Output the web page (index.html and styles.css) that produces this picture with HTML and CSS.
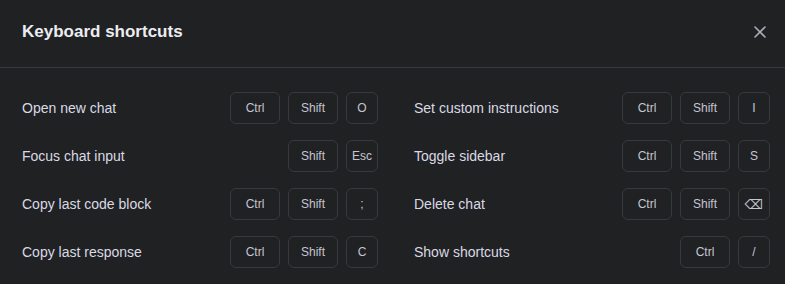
FILE: index.html
```html
<!DOCTYPE html>
<html lang="en">
<head>
<meta charset="UTF-8">
<meta name="viewport" content="width=device-width, initial-scale=1.0">
<title>Keyboard shortcuts</title>
<link rel="stylesheet" href="styles.css">
</head>
<body>
<div class="dialog">
  <div class="header">
    <div class="title">Keyboard shortcuts</div>
    <button class="close" aria-label="Close">
      <svg width="12" height="12" viewBox="0 0 12 12" fill="none">
        <path d="M1 1L11 11M11 1L1 11" stroke="currentColor" stroke-width="1.6" stroke-linecap="round"/>
      </svg>
    </button>
  </div>

  <div class="shortcuts">
    <div class="shortcut">
      <span class="label">Open new chat</span>
      <div class="keys"><kbd class="key word">Ctrl</kbd><kbd class="key word">Shift</kbd><kbd class="key">O</kbd></div>
    </div>
    <div class="shortcut">
      <span class="label">Set custom instructions</span>
      <div class="keys"><kbd class="key word">Ctrl</kbd><kbd class="key word">Shift</kbd><kbd class="key">I</kbd></div>
    </div>
    <div class="shortcut">
      <span class="label">Focus chat input</span>
      <div class="keys"><kbd class="key word">Shift</kbd><kbd class="key">Esc</kbd></div>
    </div>
    <div class="shortcut">
      <span class="label">Toggle sidebar</span>
      <div class="keys"><kbd class="key word">Ctrl</kbd><kbd class="key word">Shift</kbd><kbd class="key">S</kbd></div>
    </div>
    <div class="shortcut">
      <span class="label">Copy last code block</span>
      <div class="keys"><kbd class="key word">Ctrl</kbd><kbd class="key word">Shift</kbd><kbd class="key">;</kbd></div>
    </div>
    <div class="shortcut">
      <span class="label">Delete chat</span>
      <div class="keys"><kbd class="key word">Ctrl</kbd><kbd class="key word">Shift</kbd><kbd class="key glyph">⌫</kbd></div>
    </div>
    <div class="shortcut">
      <span class="label">Copy last response</span>
      <div class="keys"><kbd class="key word">Ctrl</kbd><kbd class="key word">Shift</kbd><kbd class="key">C</kbd></div>
    </div>
    <div class="shortcut">
      <span class="label">Show shortcuts</span>
      <div class="keys"><kbd class="key word">Ctrl</kbd><kbd class="key">/</kbd></div>
    </div>
  </div>
</div>
</body>
</html>
```

FILE: styles.css
```css
body {
  margin: 0;
  background: #202123;
  font-family: "Liberation Sans", Arial, sans-serif;
  color: #d9d9e3;
}
.dialog {
  width: 785px;
  height: 284px;
  overflow: hidden;
}
.header {
  display: flex;
  justify-content: space-between;
  align-items: center;
  height: 68px;
  padding: 0 19px 0 22px;
  border-bottom: 1px solid #38393e;
  box-sizing: border-box;
}
.title {
  font-size: 17px;
  font-weight: bold;
  color: #ececf1;
  margin-top: -3px;
}
.close {
  background: none;
  border: none;
  padding: 0;
  width: 12px;
  height: 12px;
  color: #acacbe;
  margin-top: -4px;
}
.close svg {
  display: block;
}
.shortcuts {
  display: grid;
  grid-template-columns: 356px 356px;
  column-gap: 36px;
  row-gap: 16px;
  padding: 24px 15px 0 22px;
}
.shortcut {
  display: flex;
  justify-content: space-between;
  align-items: center;
  height: 32px;
}
.label {
  font-size: 14px;
  color: #d9d9e3;
}
.keys {
  display: flex;
  gap: 8px;
}
.key {
  display: flex;
  justify-content: center;
  align-items: center;
  box-sizing: border-box;
  min-width: 32px;
  height: 32px;
  padding: 0 4px;
  border: 1px solid #38393e;
  border-radius: 6px;
  font-family: "Liberation Sans", Arial, sans-serif;
  font-size: 12px;
  color: #c5c5d2;
}
.key.word {
  min-width: 50px;
}
.key.glyph {
  font-family: "DejaVu Sans", sans-serif;
  font-size: 13px;
}
```
